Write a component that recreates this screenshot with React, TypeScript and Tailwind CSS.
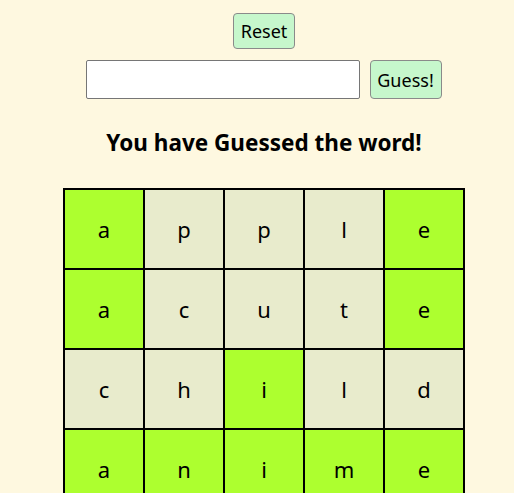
import React from "react";

const rows: { l: string; g: boolean }[][] = [
  [
    { l: "a", g: true },
    { l: "p", g: false },
    { l: "p", g: false },
    { l: "l", g: false },
    { l: "e", g: true },
  ],
  [
    { l: "a", g: true },
    { l: "c", g: false },
    { l: "u", g: false },
    { l: "t", g: false },
    { l: "e", g: true },
  ],
  [
    { l: "c", g: false },
    { l: "h", g: false },
    { l: "i", g: true },
    { l: "l", g: false },
    { l: "d", g: false },
  ],
  [
    { l: "a", g: true },
    { l: "n", g: true },
    { l: "i", g: true },
    { l: "m", g: true },
    { l: "e", g: true },
  ],
];

export default function App() {
  return (
    <div className="w-[514px] h-[493px] overflow-hidden bg-[#fef8e0]">
      <div
        className="w-[528px] flex flex-col items-center text-black"
        style={{ fontFamily: '"Noto Sans", "Open Sans", sans-serif' }}
      >
        <button className="shrink-0 mt-[13px] h-[36px] px-[7px] bg-[#c6f7cc] border border-[#8a8a8a] rounded-[4px] text-[18px] leading-none">
          Reset
        </button>
        <div className="shrink-0 mt-[11px] flex items-center gap-[10px] ml-[-1px]">
          <input
            type="text"
            className="w-[274px] h-[39px] bg-white border border-[#767676] rounded-[2px] px-2 text-[18px] outline-none"
          />
          <button className="h-[39px] w-[72px] bg-[#c6f7cc] border border-[#8a8a8a] rounded-[4px] text-[18px] leading-none">
            Guess!
          </button>
        </div>
        <h2 className="shrink-0 mt-[29px] text-[22.5px] font-bold leading-[30px]">
          You have Guessed the word!
        </h2>
        <div className="shrink-0 mt-[30px] grid grid-cols-[repeat(5,78px)] gap-[2px] p-[2px] bg-black">
          {rows.flat().map((c, i) => (
            <div
              key={i}
              className={`h-[78px] flex items-center justify-center text-[22px] ${
                c.g ? "bg-[#adff2f]" : "bg-[#e8ebcc]"
              }`}
            >
              {c.l}
            </div>
          ))}
        </div>
      </div>
    </div>
  );
}
